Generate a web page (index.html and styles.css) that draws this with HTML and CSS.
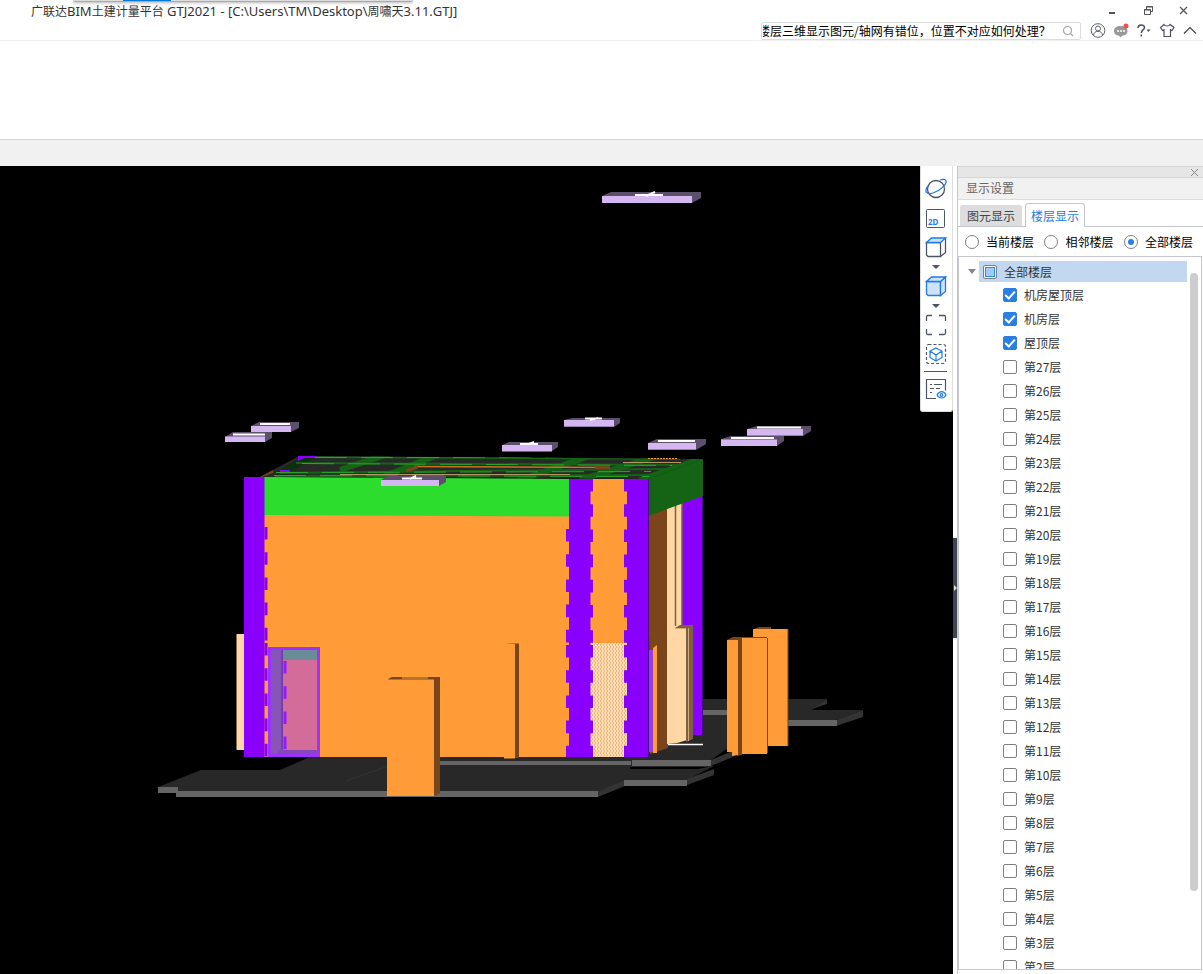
FILE: index.html
```html
<!DOCTYPE html>
<html lang="zh-CN">

<head>
    <meta charset="utf-8" />
    <meta name="viewport" content="width=device-width, initial-scale=1.0">
    <title>广联达BIM土建计量平台 GTJ2021</title>
    <link rel="stylesheet" href="styles.css">
</head>

<body>
    <header id="header">
        <div class="floating-bar"></div>
        <div class="titlebar">
            <h1 class="title">广联达<span class="latin">BIM</span>土建计量平台<span class="latin"> GTJ2021 - [C:\Users\TM\Desktop\</span>周嘯天<span class="latin">3.11.GTJ]</span></h1>
            <div class="window-buttons">
                <button type="button" aria-label="最小化"><svg width="12" height="12"><path d="M3 8h6" stroke="#555" stroke-width="2" /></svg></button>
                <button type="button" aria-label="还原"><svg width="12" height="12" fill="none" stroke="#555"><path d="M4.5 4V1.5h6v5H9M4 2h7" /><path d="M2.5 4.5h6v5h-6zM2 5h7" /></svg></button>
                <button type="button" aria-label="关闭"><svg width="12" height="12"><path d="M2 2l7 7M9 2l-7 7" stroke="#555" stroke-width="1.3" /></svg></button>
            </div>
        </div>
        <div class="searchrow">
            <div class="searchbox">
                <input type="text" aria-label="搜索" value="楼层三维显示图元/轴网有错位，位置不对应如何处理？">
                <button type="button" aria-label="搜索"><svg width="12" height="12" fill="none" stroke="#a5a5a5" stroke-width="1.2"><circle cx="5.500" cy="5.500" r="4" /><path d="M8.500 8.500L11 11" /></svg></button>
            </div>
            <button type="button" aria-label="用户"><svg width="16" height="16" fill="none" stroke="#5c6170"><circle cx="8" cy="7.500" r="6.800" /><circle cx="8" cy="5.500" r="2.500" /><path d="M3.500 12c.5-5 8.500-5 9 0" /></svg></button>
            <button type="button" aria-label="消息"><svg width="16" height="16"><path d="M7.500 3C3.500 3 1 5 1 8s2.500 4.500 5 4.700l1.500 1.800L9 12.700c3-.2 5.500-1.700 5.500-4.700s-3-5-7-5z" fill="#999" /><path d="M4 8h2M7 8h2M10 8h2" stroke="#fff" stroke-width="1.500" /><circle cx="13" cy="3" r="2.500" fill="#fa4b4b" /></svg></button>
            <button type="button" aria-label="帮助"><svg width="16" height="16"><path d="M2 5C2 1 8.500 1 8.500 4.500 8.500 7 5.300 6.800 5.300 10M5.300 11.500v2" fill="none" stroke="#4a5060" stroke-width="1.500" /><path d="M10.500 6.500h4l-2 2.500z" fill="#4a5060" /></svg></button>
            <button type="button" aria-label="皮肤"><svg width="16" height="16" fill="none" stroke="#4a5060" stroke-width="1.2"><path d="M5 1.500L1.500 4.500l2 3L5 6.700V13.500h6.500V6.700l1.500.8 2-3-4-3c-1 2-5 2-6 0z" /></svg></button>
            <button type="button" aria-label="收起"><svg width="16" height="16" fill="none" stroke="#444" stroke-width="1.2"><path d="M2 10.500l6-6 6 6" /></svg></button>
        </div>
    </header>
    <div class="ribbon"></div>
    <div class="strip"></div>

    <main id="main">
        <section id="viewport">
            <svg class="scene" viewBox="0 166 953 808" preserveAspectRatio="xMidYMid slice" role="img" aria-label="三维模型">
                <defs>
                    <pattern id="mesh" width="3" height="4" patternUnits="userSpaceOnUse">
                        <rect width="3" height="4" fill="#ffddb2" />
                        <path d="M.5 0v2M1.500 2v2" stroke="#f0b27c" stroke-width="1" />
                    </pattern>
                    <clipPath id="roof">
                        <path d="M260 477L299 456L703 459L648 479z" />
                    </clipPath>
                </defs>

                <!-- ground slabs -->
                <path d="M158 787L201 770H280L310 757H480L640 735L702 699H827L812 710L863 710L836 720H790L725 750L711 760L632 766H714L687 780L624 781L598 791L176 792z" fill="#282828" />
                <path d="M346 781L388 766" stroke="#333" />
                <path d="M827 699v5l-15 5M863 710v7l-27 9v-6zM711 760v6l24-10v-6zM714 769v6l-27 10v-6zM598 791v6l27-11v-6z" fill="#333" />
                <path d="M702 710h26v5h-26zM788 720h49v6h-49zM158 787h20v6h-20zM176 791h422v6H176zM440 761h191v4H440zM632 760h79v6h-79zM624 780h63v6h-63z" fill="#656565" />
                <path d="M630 767h78l-10 2h-68z" fill="#000" />

                <!-- side face -->
                <path d="M682 459h21v276h-21z" fill="#8a00ff" />
                <path d="M702.500 459v276" stroke="#4b0b8b" />
                <path d="M648 514L668 507V748L650 754z" fill="#7a451a" />
                <path d="M667 505l15-6v128h9v112l-14 4-10 1z" fill="#ffd7a4" />
                <path d="M675.500 503v123M682 498v129" stroke="#7c6043" stroke-width="1.500" />
                <path d="M675 628l5-3h13v114l-7 3V628z" fill="#7c6043" />
                <path d="M675 628.500h11M688.500 628v113" stroke="#d4ab78" />
                <path d="M653 648l4-3v108h-4z" fill="#ff9c37" />
                <path d="M649 650h4v102h-4z" fill="#993cdf" />
                <path d="M668 744.500h35" stroke="#fff" stroke-width="1.500" />
                <path d="M648 478L703 459v37L648 516z" fill="#156315" />

                <!-- roof -->
                <path d="M260 477L299 456L703 459L648 479z" fill="#282828" />
                <g clip-path="url(#roof)" fill="none">
                    <g stroke="#156315">
                        <path d="M340 470l60-20M370 482l75-30M515 482l80-28M580 480l90-28M640 480l63-22" stroke-width="6" />
                        <path d="M278 475l35-20" stroke="#0b300b" stroke-width="7" />
                        <path d="M300 457l380 2M280 473l385-4M275 476l375-1M296 463l380 2" stroke-width="2" />
                    </g>
                    <g stroke="#27a827" stroke-dasharray="32 14">
                        <path d="M315 457.500h330M302 463.500l370 2M276 472.500l375-1M274 475.500l375 1" />
                    </g>
                    <path d="M415 466.500l195 1" stroke="#c87323" stroke-width="1.500" />
                    <path d="M406 471l12-4M595 467.500h15M260 476l13-5" stroke="#7a451a" stroke-width="3" />
                    <path d="M340 474.500h230M623 462.500h58" stroke="#b69269" />
                </g>
                <path d="M648 458.500h30" stroke="#ff9c37" stroke-dasharray="2 1" />
                <path d="M298 456h20l-6 2h-8l-6 3zM280 470h10v2h-10z" fill="#8a00ff" />

                <!-- front face -->
                <path d="M236.500 634h8v116h-8z" fill="#ffd7a4" />
                <path d="M264 514h384v243H264z" fill="#ff9c37" />
                <path d="M264 477l306 2v37.500l-306-1.500z" fill="#2ddd2d" />
                <path d="M590 479h37v164h-37z" fill="#ff9c37" />
                <path d="M590 643h37v114h-37z" fill="url(#mesh)" />
                <g fill="#8a00ff">
                    <path d="M244 477h20.500v280H244z" />
                    <path d="M569 479h21.500v278H569zM627 479h21v278h-21z" />
                </g>
                <g stroke="#8a00ff" stroke-width="3" stroke-dasharray="12.600">
                    <path d="M266 527v115M266 643v114" />
                    <path d="M567.500 529v114M567.500 645v112" />
                    <path d="M591.500 479v164M591.500 645v112M625.500 479v164M625.500 645v112" />
                </g>
                <path d="M648.500 479v278" stroke="#4b0b8b" />

                <!-- door -->
                <path d="M268 647h52v110h-52z" fill="#9c32ff" />
                <path d="M271 650h12v103l-12 1z" fill="#8754b8" />
                <path d="M283 650h34v10h-34z" fill="#6a8b98" />
                <path d="M283 660h34v90h-34z" fill="#d36c98" />
                <path d="M278 750h39v4h-39z" fill="#8548b9" />
                <path d="M282 650v100" stroke="#6a20ae" />
                <path d="M285 661v89" stroke="#921aff" stroke-width="3" stroke-dasharray="12.600" />

                <!-- free standing walls -->
                <path d="M388 679l4-2h48v116l-5 3z" fill="#7a451a" />
                <path d="M387 679.500h47V796h-47z" fill="#ff9c37" />
                <path d="M402 678h26" stroke="#ff9c37" />
                <path d="M505 643.500h14V758h-4v-114z" fill="#7a451a" />
                <path d="M504 645h11v113.500h-11z" fill="#ff9c37" />
                <path d="M754 629l5-2h12v4h-17z" fill="#7a451a" />
                <path d="M753 629h35v117h-35z" fill="#ff9c37" />
                <path d="M788 629v117M767.500 638v115" stroke="#7a451a" />
                <path d="M727 640l6-3h34v5h-25v113l-5 1z" fill="#7a451a" />
                <path d="M742 638h25v116h-25zM727 640h11v115l-6 1v-4h-5z" fill="#ff9c37" />

                <!-- floating slabs -->
                <g fill="#5c4f6b">
                    <path d="M602 196l9-4h90v6l-9 5h-90z" />
                    <path d="M251 426l8-4h40v6l-8 4h-40zM225 437l8-5h39v6l-7 4h-40z" />
                    <path d="M564 420l8-2h48v5l-6 4h-50zM502 445l7-3h49v5l-6 4h-50z" />
                    <path d="M648 443l9-4h49v5l-10 6h-48zM721 439l10-3h53v5l-7 5h-56zM747 429l10-3h54v5l-8 5h-56z" />
                    <path d="M381 480l6-4h59v6l-7 4h-58z" />
                </g>
                <path d="M602 196h90v7h-90zM251 426h40v6h-40zM225 436.500h40v5.500h-40zM564 420h50v6.500h-50zM502 445h50v6.500h-50zM648 443h48v6.500h-48zM721 439.500h56v6.500h-56zM747 429h56v6.500h-56zM381 480h58v6h-58z" fill="#d4b6f0" />
                <g stroke="#fff" stroke-width="2">
                    <path d="M635 195h28M646 196l9-4M260 424h30M233 434.500h32M585 418.500h17M590 420l8-2M520 444h18M529 444l5-2M658 441h37M731 438h43M757 427.500h44M402 478.500h20M410 479l6-3" />
                </g>
            </svg>

            <nav class="toolbar">
                <button type="button" aria-label="动态观察"><svg width="22" height="22" fill="none" stroke-width="1.3"><circle cx="11" cy="11" r="8.500" stroke="#4d5566" /><path d="M3 8C-1 13 1 17 8 15c7-2 14-9 13-12-.5-2-3-2-6-1" stroke="#1f7be6" /></svg></button>
                <button type="button" aria-label="二维" class="two-d"><svg width="22" height="22"><rect x="1.500" y="2.500" width="18" height="18" rx="1" fill="none" stroke="#4d5566" /><text x="3" y="18">2D</text></svg></button>
                <button type="button" aria-label="视图"><svg width="22" height="22" fill="none" stroke="#4d5566" stroke-width="1.3"><path d="M1.500 6.500h14v14H3L1.500 19zM15.500 20.500l5-4V2" /><path d="M1.500 6.500l5-4.500h14l-5 4.500z" fill="#cfe2fa" stroke="#1f7be6" /></svg></button>
                <i class="arrow"></i>
                <button type="button" aria-label="显示模式"><svg width="22" height="22" fill="#cfe2fa" stroke="#1f7be6" stroke-width="1.3"><path d="M1.500 6.500h14v14H3L1.500 19z" /><path d="M15.500 20.500l5-4V2l-5 4.500z" /><path d="M1.500 6.500l5-4.500h14l-5 4.500z" /></svg></button>
                <i class="arrow"></i>
                <button type="button" aria-label="全屏"><svg width="22" height="22" fill="none" stroke="#4d5566" stroke-width="1.3"><path d="M1.500 7V3q0-1.500 1.500-1.500h4M14 1.500h5q1.500 0 1.500 1.500v4M20.500 15v4q0 1.500-1.500 1.500h-5M7 20.500H3q-1.500 0-1.500-1.500v-4" /></svg></button>
                <button type="button" aria-label="局部三维"><svg width="22" height="22" fill="none" stroke-width="1.2"><rect x="1.500" y="1.500" width="19" height="19" rx="2" stroke="#4d5566" stroke-dasharray="3 2" /><path d="M11 5l6 3v6.500L11 18l-6-3.500V8zM5 8l6 4 6-4M11 12v6" stroke="#1f7be6" /></svg></button>
                <hr>
                <button type="button" aria-label="显示设置"><svg width="22" height="22" fill="none" stroke="#4d5566" stroke-width="1.2"><path d="M11 20.500H1.500v-19h19v11M5 6.500h2M9 6.500h8M5 10.500h4M11 10.500h4M5 14.500h2" /><path d="M12 17c2.500-4.500 7-4.500 9 0-2 4-6.500 4-9 0z" stroke="#1f7be6" /><circle cx="16.500" cy="17" r="1.300" stroke="#1f7be6" /></svg></button>
            </nav>
        </section>

        <div class="splitter"><button type="button" aria-label="收起面板"></button></div>

        <aside id="panel">
            <div class="panel-top"><button type="button" aria-label="关闭"><svg width="9" height="9"><path d="M1 1l7 7M8 1L1 8" stroke="#888" /></svg></button></div>
            <h2 class="panel-title">显示设置</h2>
            <div class="tabs">
                <button type="button" class="tab">图元显示</button>
                <button type="button" class="tab active">楼层显示</button>
            </div>
            <div class="radios">
                <label><input type="radio" name="floor">当前楼层</label>
                <label><input type="radio" name="floor">相邻楼层</label>
                <label><input type="radio" name="floor" checked>全部楼层</label>
            </div>
            <div class="tree">
                <div class="root">
                    <i class="expander"></i>
                    <label><input type="checkbox" class="partial">全部楼层</label>
                </div>
                <ul class="floors">
                    <li><label><input type="checkbox" checked>机房屋顶层</label></li>
                    <li><label><input type="checkbox" checked>机房层</label></li>
                    <li><label><input type="checkbox" checked>屋顶层</label></li>
                    <li><label><input type="checkbox">第27层</label></li>
                    <li><label><input type="checkbox">第26层</label></li>
                    <li><label><input type="checkbox">第25层</label></li>
                    <li><label><input type="checkbox">第24层</label></li>
                    <li><label><input type="checkbox">第23层</label></li>
                    <li><label><input type="checkbox">第22层</label></li>
                    <li><label><input type="checkbox">第21层</label></li>
                    <li><label><input type="checkbox">第20层</label></li>
                    <li><label><input type="checkbox">第19层</label></li>
                    <li><label><input type="checkbox">第18层</label></li>
                    <li><label><input type="checkbox">第17层</label></li>
                    <li><label><input type="checkbox">第16层</label></li>
                    <li><label><input type="checkbox">第15层</label></li>
                    <li><label><input type="checkbox">第14层</label></li>
                    <li><label><input type="checkbox">第13层</label></li>
                    <li><label><input type="checkbox">第12层</label></li>
                    <li><label><input type="checkbox">第11层</label></li>
                    <li><label><input type="checkbox">第10层</label></li>
                    <li><label><input type="checkbox">第9层</label></li>
                    <li><label><input type="checkbox">第8层</label></li>
                    <li><label><input type="checkbox">第7层</label></li>
                    <li><label><input type="checkbox">第6层</label></li>
                    <li><label><input type="checkbox">第5层</label></li>
                    <li><label><input type="checkbox">第4层</label></li>
                    <li><label><input type="checkbox">第3层</label></li>
                    <li><label><input type="checkbox">第2层</label></li>
                </ul>
                <div class="scrollbar"></div>
            </div>
        </aside>
    </main>
</body>

</html>
```
FILE: styles.css
```css
*,
*::after {
    box-sizing: border-box;
}

body {
    margin: 0;
    height: 100vh;
    display: flex;
    flex-direction: column;
    overflow: hidden;
    background: #fff;
    color: #333;
    font-family: "Noto Sans CJK SC", sans-serif;
    font-size: 12px;
    line-height: 16px;
}

button {
    display: flex;
    align-items: center;
    justify-content: center;
    padding: 0;
    border: 0;
    background: none;
    font: inherit;
    color: inherit;
}

#header {
    position: relative;
    height: 41px;
    border-bottom: 1px solid #f0f0f0;
}

.floating-bar {
    position: absolute;
    top: 0;
    left: 73px;
    width: 340px;
    height: 2px;
    border-bottom: 1px solid #aaa;
    border-radius: 0 0 6px 6px;
    background: linear-gradient(90deg, #ddd 50px, #0078d7 50px, #0078d7 98px, #ddd 98px);
    box-shadow: 0 1px 3px #aaa;
}

.titlebar {
    display: flex;
    align-items: center;
    justify-content: space-between;
    height: 21px;
    padding: 0 13px 0 31px;
}

.title {
    margin: 0;
    font-size: 12px;
    font-weight: normal;
}

.latin {
    font-family: "Noto Sans", sans-serif;
    font-size: 13px;
}

.window-buttons {
    display: flex;
    gap: 24px;
}

.searchrow {
    display: flex;
    align-items: center;
    justify-content: flex-end;
    gap: 7px;
    height: 19px;
    padding-right: 5px;
}

.searchbox {
    display: flex;
    align-items: center;
    width: 320px;
    height: 18px;
    padding: 0 6px 0 1px;
    margin-right: 2px;
    border: 1px solid #ddd;
    border-radius: 2px;
}

.searchbox input {
    flex: 1;
    min-width: 0;
    height: 16px;
    padding: 0;
    border: 0;
    outline: 0;
    background: none;
    font: inherit;
    color: #000;
    text-indent: -5px;
}

.ribbon {
    height: 98px;
}

.strip {
    height: 27px;
    border-top: 1px solid #d5d5d5;
    background: #f1f1f1;
}

#main {
    flex: 1;
    min-height: 0;
    display: flex;
}

#viewport {
    position: relative;
    flex: 1;
    min-width: 0;
    background: #000;
}

.scene {
    display: block;
    width: 100%;
    height: 100%;
}

.toolbar {
    position: absolute;
    top: 0;
    right: 0;
    display: flex;
    flex-direction: column;
    align-items: center;
    gap: 7px;
    width: 33px;
    height: 246px;
    padding: 12px 2px 0 0;
    border: 1px solid #ddd;
    border-top: 0;
    border-radius: 0 0 3px 3px;
    background: #fff;
}

.toolbar hr {
    width: 23px;
    margin: -1px 0;
    border: 0;
    border-top: 1px solid #4d5566;
}

.two-d text {
    font-family: "Open Sans", sans-serif;
    font-size: 8px;
    font-weight: bold;
    fill: #1f7be6;
}

.arrow {
    margin-bottom: -1px;
    border: 4px solid transparent;
    border-top-color: #4d5566;
    border-bottom: 0;
}

.splitter {
    display: flex;
    align-items: center;
    width: 4px;
    padding-top: 36px;
    background: #fff;
}

.splitter button {
    width: 4px;
    height: 100px;
    background: #3e4654;
}

.splitter button::after {
    content: "";
    border: 3px solid transparent;
    border-left-color: #ddd;
    border-right: 0;
}

#panel {
    display: flex;
    flex-direction: column;
    width: 246px;
    padding-bottom: 4px;
    border-left: 1px solid #c4c8ce;
}

.panel-top {
    display: flex;
    align-items: center;
    justify-content: flex-end;
    height: 12px;
    padding-right: 4px;
    border-top: 1px solid #d5d5d5;
    border-bottom: 1px solid #d5d5d5;
    background: #e6e6e6;
}

.panel-title {
    height: 22px;
    margin: 0;
    padding-left: 8px;
    border-bottom: 1px solid #ddd;
    background: #f1f1f1;
    font-size: 12px;
    font-weight: normal;
    line-height: 20px;
    color: #666;
}

.tabs {
    display: flex;
    gap: 3px;
    height: 27px;
    padding: 3px 2px 0;
    border-bottom: 1px solid #c4c8ce;
}

.tab {
    width: 62px;
    height: 21px;
    margin-top: 2px;
    border-radius: 3px 3px 0 0;
    background: #ddd;
    color: #444;
}

.tab.active {
    width: 60px;
    height: 24px;
    margin-top: 0;
    border: 1px solid #c4c8ce;
    border-bottom: 0;
    background: #fff;
    color: #1f7be6;
}

.radios {
    display: flex;
    justify-content: space-between;
    height: 29px;
    padding: 0 10px 0 7px;
    color: #000;
}

label {
    display: flex;
    align-items: center;
    gap: 7px;
    line-height: 14px;
}

input[type="radio"],
input[type="checkbox"] {
    appearance: none;
    display: grid;
    place-items: center;
    flex: none;
    width: 14px;
    height: 14px;
    margin: 0;
    border: 1px solid #808080;
    background: #fff;
}

input[type="radio"] {
    border-radius: 50%;
}

input[type="radio"]:checked::after {
    content: "";
    width: 6px;
    height: 6px;
    border-radius: 50%;
    background: #2b7fe3;
}

input[type="checkbox"] {
    border-radius: 2px;
}

input[type="checkbox"]:checked {
    border-color: #2b7fe3;
    background: #2b7fe3;
}

input[type="checkbox"]:checked::after {
    content: "";
    width: 10px;
    height: 6px;
    margin-bottom: 3px;
    border: solid #fff;
    border-width: 0 0 2px 2px;
    transform: rotate(-48deg);
}

.partial::after {
    content: "";
    width: 10px;
    height: 10px;
    border: 1px solid #2b8cf0;
    background: #9fcbfb;
}

.tree {
    position: relative;
    flex: 1;
    min-height: 0;
    margin-right: 1px;
    padding-top: 4px;
    overflow: hidden;
    border: 1px solid #c4c8ce;
}

.root {
    display: flex;
    align-items: center;
    gap: 3px;
    height: 21px;
    padding: 0 14px 0 9px;
}

.root label {
    flex: 1;
    height: 21px;
    padding-left: 4px;
    background: #c2d8f0;
}

.expander {
    border: 4px solid transparent;
    border-top: 5px solid #888;
    border-bottom: 0;
}

.floors {
    margin: 1px 0 0;
    padding: 0 0 0 44px;
    list-style: none;
}

.floors label {
    height: 24px;
}

.scrollbar {
    position: absolute;
    top: 16px;
    right: 3px;
    width: 8px;
    height: 618px;
    border-radius: 4px;
    background: #cdcdcd;
}
```
